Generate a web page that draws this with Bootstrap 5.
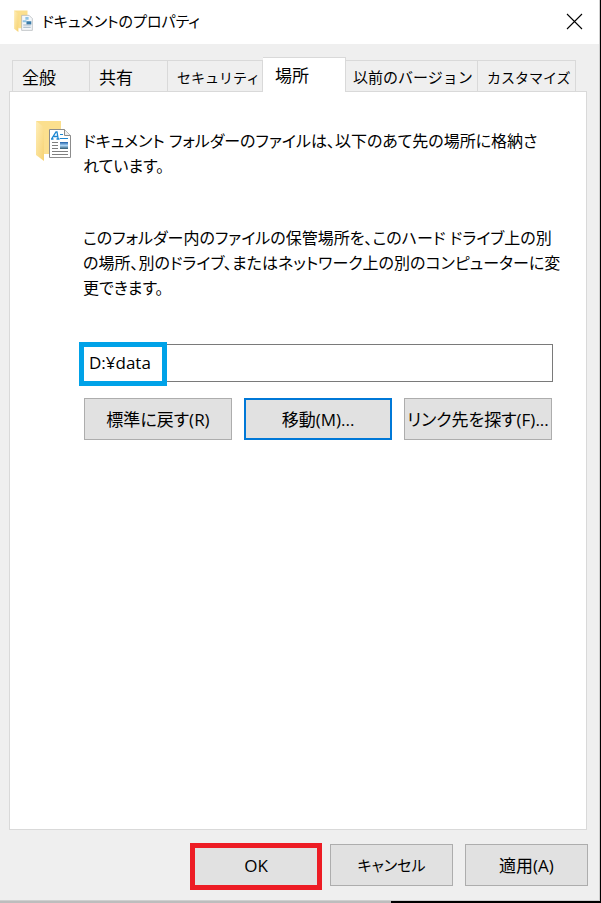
<!DOCTYPE html>
<html lang="ja">
<head>
<meta charset="utf-8">
<meta name="viewport" content="width=device-width, initial-scale=1">
<title>ドキュメントのプロパティ</title>
<link href="https://cdn.jsdelivr.net/npm/bootstrap@5.3.0/dist/css/bootstrap.min.css" rel="stylesheet">
<style>
  body { font: 17px/25px "Open Sans", "Noto Sans CJK JP", sans-serif; font-feature-settings: "palt"; color: #000; background: #000; }
  .backdrop { background: linear-gradient(90deg, #bdbdbd 65%, #000 65%) bottom / 100% 2px no-repeat #000; padding: 0 1px 2px 0; }
  .dialog-window { background: #efefef; border: solid #cfcfcf; border-width: 0 1px 1px 0; }
  .title-bar { height: 44px; padding: 0 16px 2px 13px; }
  .title-bar h1 { font-size: 15px; }
  .close-button { line-height: 0; }
  .tab-strip { display: grid; grid-template-columns: 78fr 78fr 95fr 83fr 132fr 98fr; margin: 13px 23px 0 12px; }
  .tab-strip li { min-width: 0; }
  .tab-strip .nav-link { width: 100%; height: 31px; margin: 3px 0 0; padding: 3px 0 0 9px; border: 1px solid #d9d9d9; border-width: 1px 1px 0 0; border-radius: 0; color: #000; text-align: left; white-space: nowrap; }
  .tab-strip li:first-child .nav-link { border-left-width: 1px; }
  .tab-strip .nav-link.active { height: 35px; margin: 0 0 -1px; padding: 0 0 0 12px; position: relative; background: #fff; border-color: #d9d9d9; }
  .tab-strip .mixed-label { font-size: 15px; padding-left: 7px; }
  .tab-strip .kana-label { font-size: 14px; }
  .tab-panel { margin: 0 12px 0 9px; padding: 29px 33px 0 26px; background: #fff; border: 1px solid #d9d9d9; }
  .panel-body { padding-left: 11px; }
  .panel-body p { font-size: 16px; padding-top: 8px; margin-right: -20px; }
  .panel-body .intro { margin-bottom: 39px; }
  .panel-body .detail { margin-bottom: 43px; }
  .path-box { margin-left: -4px; }
  .path-box .form-control { height: 38px; padding: 0 9px 2px; border: 1px solid #7a7a7a; border-radius: 0; font: inherit; color: #000; }
  .path-mark { position: absolute; left: 0; top: -2px; width: 88px; height: 44px; border: 5px solid #00a2e8; pointer-events: none; }
  .action-row { display: grid; grid-template-columns: repeat(3, 1fr); gap: 12px; margin: 16px 1px 0 1px; }
  .dialog-btn { height: 42px; padding: 0; border: 1px solid #adadad; border-radius: 0; background: #e1e1e1; color: #000; font: inherit; white-space: nowrap; }
  .default-btn { border: 2px solid #0078d7; }
  .dialog-footer { padding: 13px 11px 10px; gap: 12px; }
  .dialog-footer .dialog-btn { width: 123px; margin-top: 1px; }
  .dialog-footer .ok-btn { width: 132px; height: 47px; margin: 0 -4px 0 0; padding-bottom: 2px; border: 5px solid #ed1c24; }
  .dialog-footer .cancel-btn { font-size: 15px; }
</style>
<script src="https://cdn.jsdelivr.net/npm/bootstrap@5.3.0/dist/js/bootstrap.bundle.min.js"></script>
</head>
<body>
<svg class="position-absolute" width="0" height="0" aria-hidden="true">
  <defs>
    <linearGradient id="folderFill" x1="0" x2="1" y2="1"><stop stop-color="#ffeeb8"/><stop offset="1" stop-color="#f6d272"/></linearGradient>
    <linearGradient id="photoFill" x1="0" x2="0" y1="0" y2="1"><stop stop-color="#1b5faa"/><stop offset=".5" stop-color="#a9d3f5"/><stop offset="1" stop-color="#2b5873"/></linearGradient>
  </defs>
</svg>
<div class="backdrop min-vh-100 d-flex">
  <main class="dialog-window flex-grow-1 d-flex flex-column">
    <header class="title-bar bg-white d-flex align-items-center">
      <svg class="me-1" width="21" height="22" viewBox="0 0 37 41" aria-hidden="true">
        <path d="M1 1h25v33H9z" fill="#fbdf8e"/><path d="M1 1l8 6v34l-8-6z" fill="url(#folderFill)"/>
        <path d="M15 10h14l6 6v22H15z" fill="#f4f7fa" stroke="#9a9fa4"/><path d="M17 19h7v4h-7zM22 13h6v5h-6z" fill="#8fc3e4"/><path d="M24 21h9v6h-9z" fill="#397ba8"/><path d="M18 28h14M18 32h14" stroke="#9fb4c4" stroke-width="2"/>
      </svg>
      <h1 class="m-0 ps-1 fw-normal flex-grow-1">ドキュメントのプロパティ</h1>
      <button type="button" class="close-button btn p-0 border-0" aria-label="閉じる">
        <svg width="18" height="18" viewBox="0 0 18 18" fill="none" stroke="#000" stroke-width="1.1"><path d="M2 2l15 15M17 2L2 17"/></svg>
      </button>
    </header>
    <ul class="tab-strip nav list-unstyled align-items-end" role="tablist">
      <li role="presentation"><button class="nav-link" type="button" role="tab">全般</button></li>
      <li role="presentation"><button class="nav-link" type="button" role="tab">共有</button></li>
      <li role="presentation"><button class="nav-link kana-label" type="button" role="tab">セキュリティ</button></li>
      <li role="presentation"><button class="nav-link active" type="button" role="tab" aria-selected="true">場所</button></li>
      <li role="presentation"><button class="nav-link mixed-label" type="button" role="tab">以前のバージョン</button></li>
      <li role="presentation"><button class="nav-link kana-label" type="button" role="tab">カスタマイズ</button></li>
    </ul>
    <section class="tab-panel flex-grow-1 d-flex align-items-start" role="tabpanel">
      <svg class="flex-shrink-0" width="36" height="41" viewBox="0 0 36 41" aria-hidden="true">
        <path d="M0 0h25v33H8z" fill="#fbdf8e"/>
        <path d="M0 0l8 6v34l-8-6z" fill="url(#folderFill)"/>
        <path d="M13.500 8.500h15l6 6v22h-21z" fill="#fff" stroke="#8c8c8c"/>
        <path d="M28.500 8.500v6h6" fill="#eee" stroke="#8c8c8c"/>
        <path d="M15.500 18l4.500-7h1l1.200 7M17.500 15.500h4.500M15 18h2.500M20.500 18h3" fill="none" stroke="#1c86d1" stroke-width="1.3"/>
        <path d="M24 13.500h3M24 17.500h8" stroke="#1c86d1"/>
        <path d="M16 21.500h6M16 24.500h6M16 27.500h6M16 30.500h16M16 33.500h16" stroke="#7f7f7f"/>
        <path d="M24 21h8v7h-8z" fill="url(#photoFill)"/>
      </svg>
      <div class="panel-body flex-grow-1">
        <p class="intro">ドキュメント フォルダーのファイルは、以下のあて先の場所に格納さ<br>れています。</p>
        <p class="detail">このフォルダー内のファイルの保管場所を、このハード ドライブ上の別<br>の場所、別のドライブ、またはネットワーク上の別のコンピューターに変<br>更できます。</p>
        <div class="path-box position-relative">
          <input class="form-control shadow-none" type="text" value="D:¥data" aria-label="フォルダーの場所">
          <span class="path-mark"></span>
        </div>
        <div class="action-row">
          <button type="button" class="btn dialog-btn">標準に戻す(R)</button>
          <button type="button" class="btn dialog-btn default-btn">移動(M)...</button>
          <button type="button" class="btn dialog-btn">リンク先を探す(F)...</button>
        </div>
      </div>
    </section>
    <footer class="dialog-footer d-flex justify-content-end align-items-start">
      <button type="button" class="btn dialog-btn ok-btn">OK</button>
      <button type="button" class="btn dialog-btn cancel-btn">キャンセル</button>
      <button type="button" class="btn dialog-btn">適用(A)</button>
    </footer>
  </main>
</div>
</body>
</html>
